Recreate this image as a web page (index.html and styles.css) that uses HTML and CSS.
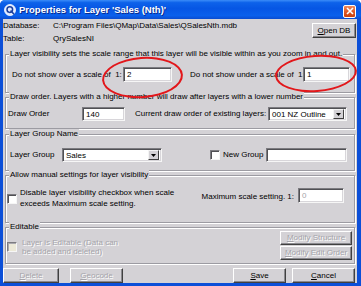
FILE: index.html
```html
<!DOCTYPE html>
<html>
<head>
<meta charset="utf-8">
<link rel="stylesheet" href="styles.css">
</head>
<body>
<div class="window">
  <div class="titlebar">
    <svg class="appicon" width="12" height="12" viewBox="0 0 12 12">
      <circle cx="6" cy="6" r="5.5" fill="#dfe9ff" stroke="#ffffff" stroke-width="0.8"/>
      <circle cx="5.8" cy="5.6" r="2.8" fill="none" stroke="#1a3f9e" stroke-width="1.5"/>
      <path d="M7 7 L9.6 9.8" stroke="#1a3f9e" stroke-width="1.6" stroke-linecap="round"/>
    </svg>
    <span class="title">Properties for Layer 'Sales (Nth)'</span>
    <span class="close">
      <svg width="8" height="8" viewBox="0 0 8 8"><path d="M1 1 L7 7 M7 1 L1 7" stroke="#fff" stroke-width="1.6"/></svg>
    </span>
  </div>
  <div class="client">
    <div class="info">
      <div class="info-rows">
        <div class="info-row"><span class="info-key">Database:</span><span>C:\Program Files\QMap\Data\Sales\QSalesNth.mdb</span></div>
        <div class="info-row"><span class="info-key">Table:</span><span>QrySalesNI</span></div>
      </div>
      <span class="btn b-opendb"><u>O</u>pen DB</span>
    </div>

    <div class="group g1">
      <div class="glabel">Layer visibility sets the scale range that this layer will be visible within as you zoom in and out.</div>
      <div class="row r1">
        <span class="lbl w-over">Do not show over a scale of&nbsp; 1:</span>
        <span class="edit e-over">2</span>
        <span class="lbl w-under">Do not show under a scale of&nbsp; 1:</span>
        <span class="edit e-under">1</span>
      </div>
    </div>

    <div class="group g2">
      <div class="glabel">Draw order. Layers with a higher number will draw after layers with a lower number</div>
      <div class="row r2">
        <span class="lbl w-draw">Draw Order</span>
        <span class="edit e-draw">140</span>
        <span class="lbl w-current">Current draw order of existing layers:</span>
        <span class="edit combo c-order"><span class="ctext">001 NZ Outline</span><span class="drop"><svg width="5" height="3" viewBox="0 0 5 3"><path d="M0 0 H5 L2.5 3 Z" fill="#000"/></svg></span></span>
      </div>
    </div>

    <div class="group g3">
      <div class="glabel">Layer Group Name</div>
      <div class="row r3">
        <span class="lbl w-group">Layer Group</span>
        <span class="edit combo c-group"><span class="ctext">Sales</span><span class="drop"><svg width="5" height="3" viewBox="0 0 5 3"><path d="M0 0 H5 L2.5 3 Z" fill="#000"/></svg></span></span>
        <span class="check ck-new"></span>
        <span class="lbl w-new">New Group</span>
        <span class="edit e-new"></span>
      </div>
    </div>

    <div class="group g4">
      <div class="glabel">Allow manual settings for layer visibility</div>
      <div class="row r4">
        <span class="check ck-disable"></span>
        <span class="lbl t-disable">Disable layer visibility checkbox when scale<br>exceeds Maximum scale setting.</span>
        <span class="lbl w-max">Maximum scale setting. 1:</span>
        <span class="edit e-max disabled-text">0</span>
      </div>
    </div>

    <div class="group g5">
      <div class="glabel">Editable</div>
      <div class="row r5">
        <span class="check ck-edit disabled-check"></span>
        <span class="lbl t-edit disabled-text">Layer is Editable (Data can<br>be added and deleted)</span>
        <div class="modify">
          <span class="btn b-modify disabled-text"><u>M</u>odify Structure</span>
          <span class="btn b-modify disabled-text"><u>M</u>odify Edit Order</span>
        </div>
      </div>
    </div>

    <div class="buttons">
      <span class="btn b-delete disabled-text"><u>D</u>elete</span>
      <span class="btn b-geocode disabled-text"><u>G</u>eocode</span>
      <span class="btn b-save"><u>S</u>ave</span>
      <span class="btn b-cancel"><u>C</u>ancel</span>
    </div>
  </div>
  <div class="ellipse el1"></div>
  <div class="ellipse el2"></div>
</div>
</body>
</html>
```

FILE: styles.css
```css
html, body {
  margin: 0;
  padding: 0;
}
body {
  width: 361px;
  height: 286px;
  overflow: hidden;
  background: #ffffff;
  font-family: "Liberation Sans", Arial, sans-serif;
  font-size: 8px;
  color: #000;
}
.window {
  position: relative;
  width: 361px;
  height: 286px;
  background: #0c4fd8;
  display: flex;
  flex-direction: column;
  border-radius: 5px 5px 0 0;
  overflow: hidden;
}
.titlebar {
  flex: none;
  height: 19px;
  display: flex;
  align-items: center;
  padding: 0 4px 0 4px;
  background: linear-gradient(180deg, #3b8cf8 0%, #0d62ea 14%, #0656e4 45%, #0a60ec 82%, #0a4cd0 100%);
}
.appicon {
  flex: none;
  margin-top: 1px;
}
.title {
  margin-left: 3px;
  color: #fff;
  font-weight: bold;
  font-size: 9.5px;
  text-shadow: 1px 1px 0 #0b2a8c;
  white-space: nowrap;
}
.close {
  margin-left: auto;
  margin-right: 1px;
  margin-top: 3px;
  width: 13px;
  height: 13px;
  box-sizing: border-box;
  border: 1px solid #fff;
  border-radius: 2px;
  background: linear-gradient(180deg, #ee8a5e 0%, #e05a28 50%, #c8400e 100%);
  display: flex;
  align-items: center;
  justify-content: center;
}
.client {
  flex: 1;
  margin: 0 4px 3px 3px;
  background: #d4d2d6;
  display: flex;
  flex-direction: column;
}
.info {
  display: flex;
  height: 26px;
}
.info-row {
  display: flex;
  line-height: 13px;
  white-space: nowrap;
}
.info-key {
  width: 50px;
}
.btn {
  box-sizing: border-box;
  height: 15px;
  background: #d4d2d6;
  border: 1px solid;
  border-color: #ffffff #404040 #404040 #ffffff;
  box-shadow: inset -1px -1px 0 #8a898e;
  display: flex;
  align-items: center;
  justify-content: center;
  white-space: nowrap;
  line-height: 10px;
}
.b-opendb {
  margin-left: auto;
  margin-top: 4px;
  margin-right: 1px;
  width: 44px;
}
.group {
  margin: 0 2px 0 2px;
  border: 1px solid #9c9ba2;
  box-shadow: inset 1px 1px 0 #ffffff, 1px 1px 0 #ffffff;
}
.glabel {
  margin: -6px 0 0 3px;
  padding: 0 1px;
  line-height: 10px;
  background: #d4d2d6;
  width: max-content;
  white-space: nowrap;
  position: relative;
}
.row {
  display: flex;
  align-items: center;
}
.lbl {
  white-space: nowrap;
  line-height: 10px;
}
.edit {
  box-sizing: border-box;
  height: 15px;
  background: #fff;
  border: 1px solid;
  border-color: #7c7b80 #f6f6f6 #f6f6f6 #7c7b80;
  box-shadow: inset 1px 1px 0 #505054, inset -1px -1px 0 #d8d6da;
  padding-left: 3px;
  display: flex;
  align-items: center;
  white-space: nowrap;
}
.combo {
  padding-right: 2px;
}
.ctext {
  flex: 1;
}
.drop {
  box-sizing: border-box;
  width: 11px;
  height: 10px;
  background: #d4d2d6;
  border: 1px solid;
  border-color: #f4f4f4 #404040 #404040 #f4f4f4;
  display: flex;
  align-items: center;
  justify-content: center;
}
.check {
  flex: none;
  box-sizing: border-box;
  width: 10px;
  height: 10px;
  background: #fff;
  border: 1px solid;
  border-color: #7c7b80 #f6f6f6 #f6f6f6 #7c7b80;
  box-shadow: inset 1px 1px 0 #505054;
}
.disabled-check {
  background: #ece9d8;
  box-shadow: inset 1px 1px 0 #a9a8ad;
}
.disabled-text {
  color: #a5a4aa;
  text-shadow: 1px 1px 0 #ffffff;
}

/* group 1 */
.g1 { margin-top: 9px; }
.r1 { margin: 8px 0 10px 6px; }
.w-over { width: 111px; }
.e-over { width: 49px; }
.w-under { width: 113px; margin-left: 18px; }
.e-under { width: 47px; }

/* group 2 */
.g2 { margin-top: 4px; }
.r2 { margin: 5px 0 7px 2px; height: 14px; }
.r2 .edit { height: 14px; }
.w-draw { width: 74px; }
.e-draw { width: 43px; }
.w-current { width: 133px; margin-left: 10px; }
.c-order { width: 79px; }

/* group 3 */
.g3 { margin-top: 5px; }
.r3 { margin: 9px 0 8px 4px; height: 14px; }
.r3 .edit { height: 14px; }
.w-group { width: 52px; }
.c-group { width: 100px; }
.ck-new { margin-left: 48px; }
.w-new { margin-left: 3px; width: 43px; }
.e-new { width: 81px; }

/* group 4 */
.g4 { margin-top: 4px; }
.r4 { margin: 7px 0 13px 1px; align-items: flex-start; }
.ck-disable { margin-top: 7px; }
.t-disable { margin-left: 3px; line-height: 11px; }
.w-max { margin-left: auto; margin-top: 5px; }
.e-max { width: 46px; margin-left: 4px; margin-right: 10px; margin-top: 1px; }

/* group 5 */
.g5 { margin-top: 4px; }
.g5 .glabel { margin-bottom: -1px; }
.r5 { margin: 0 0 3px 1px; align-items: flex-start; }
.ck-edit { margin-top: 11px; }
.t-edit { margin-left: 5px; margin-top: 7px; line-height: 9px; }
.modify {
  margin-left: auto;
  margin-right: 2px;
  display: flex;
  flex-direction: column;
  gap: 1px;
}
.b-modify { width: 72px; height: 14px; }

/* bottom buttons */
.buttons {
  display: flex;
  margin-top: 4px;
  margin-right: 2px;
}
.b-delete { width: 56px; }
.b-geocode { width: 53px; margin-left: 11px; }
.b-save { width: 53px; margin-left: auto; }
.b-cancel { width: 63px; margin-left: 6px; }

/* annotation ellipses drawn over the dialog */
.ellipse {
  position: absolute;
  box-sizing: border-box;
  border: 2px solid #e2171b;
  border-radius: 50%;
}
.el1 { left: 102px; top: 57px; width: 81px; height: 41px; transform: rotate(-4deg); }
.el2 { left: 275px; top: 55px; width: 82px; height: 37px; transform: rotate(-4deg); }
```
